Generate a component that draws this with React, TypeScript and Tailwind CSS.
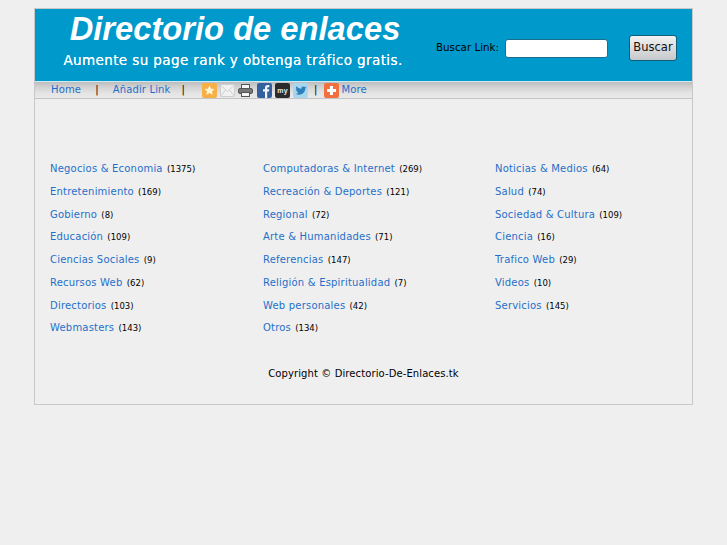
const font = { dejavu: "font-['DejaVu_Sans',sans-serif]" };

type Cat = { name: string; count: number };

const col1: Cat[] = [
  { name: 'Negocios & Economia', count: 1375 },
  { name: 'Entretenimiento', count: 169 },
  { name: 'Gobierno', count: 8 },
  { name: 'Educación', count: 109 },
  { name: 'Ciencias Sociales', count: 9 },
  { name: 'Recursos Web', count: 62 },
  { name: 'Directorios', count: 103 },
  { name: 'Webmasters', count: 143 },
];

const col2: Cat[] = [
  { name: 'Computadoras & Internet', count: 269 },
  { name: 'Recreación & Deportes', count: 121 },
  { name: 'Regional', count: 72 },
  { name: 'Arte & Humanidades', count: 71 },
  { name: 'Referencias', count: 147 },
  { name: 'Religión & Espiritualidad', count: 7 },
  { name: 'Web personales', count: 42 },
  { name: 'Otros', count: 134 },
];

const col3: Cat[] = [
  { name: 'Noticias & Medios', count: 64 },
  { name: 'Salud', count: 74 },
  { name: 'Sociedad & Cultura', count: 109 },
  { name: 'Ciencia', count: 16 },
  { name: 'Trafico Web', count: 29 },
  { name: 'Videos', count: 10 },
  { name: 'Servicios', count: 145 },
];

function Column({ items, width }: { items: Cat[]; width: string }) {
  return (
    <div className={`flex flex-col ${width}`}>
      {items.map((c) => (
        <div key={c.name} className="h-[22.75px] leading-[16px] whitespace-nowrap">
          <a className="text-[10px] tracking-[0.2px] text-[#1f6fc9]">{c.name}</a>
          <span className="ml-[1.5px] text-[8.5px] text-black"> ({c.count})</span>
        </div>
      ))}
    </div>
  );
}

function StarIcon() {
  return (
    <svg width="15" height="15" viewBox="0 0 15 15">
      <rect width="15" height="15" rx="2" fill="#f6b045" />
      <path d="M7.5 2.5l1.6 3.2 3.4.4-2.500 2.300.7 3.400-3.200-1.700-3.200 1.700.7-3.400L2.500 6.100l3.400-.4z" fill="#fff6d8" />
    </svg>
  );
}

function MailIcon() {
  return (
    <svg width="15" height="15" viewBox="0 0 15 15">
      <rect x="0.5" y="1.5" width="14" height="12" rx="1" fill="#f1f1f1" stroke="#cfcfcf" />
      <path d="M1 2.500l6.500 6 6.500-6M1 13l4.500-6M14 13l-4.500-6" fill="none" stroke="#cfcfcf" />
    </svg>
  );
}

function PrintIcon() {
  return (
    <svg width="15" height="15" viewBox="0 0 15 15">
      <rect x="3.5" y="1.5" width="8" height="4" fill="#f5f5f5" stroke="#555" />
      <rect x="0.5" y="5.5" width="14" height="5" rx="1.5" fill="#777" stroke="#555" />
      <rect x="3.5" y="9.5" width="8" height="4" fill="#f5f5f5" stroke="#555" />
    </svg>
  );
}

function FacebookIcon() {
  return (
    <svg width="15" height="15" viewBox="0 0 15 15">
      <rect width="15" height="15" rx="2" fill="#33609f" />
      <path d="M8 15V8.500H6V6.300h2V4.800C8 3 9.100 2 10.700 2h1.600v2.200h-1.100c-.8 0-1 .4-1 1v1.100h2l-.3 2.200h-1.700V15z" fill="#f2f5fa" />
    </svg>
  );
}

function MyspaceIcon() {
  return (
    <svg width="15" height="15" viewBox="0 0 15 15">
      <rect width="15" height="15" rx="2" fill="#2b2b2b" />
      <text x="7.5" y="9.5" textAnchor="middle" fontSize="7" fontWeight="700" fill="#e8e8e8" fontFamily="'Liberation Sans',sans-serif">
        my
      </text>
    </svg>
  );
}

function TwitterIcon() {
  return (
    <svg width="15" height="15" viewBox="0 0 15 15">
      <rect width="15" height="15" rx="2" fill="#a9d6ef" />
      <path d="M13.500 4.500c-.5.200-1 .4-1.500.4.500-.3 1-.8 1.100-1.400-.5.300-1 .5-1.600.6-1.100-1.200-3.400-.3-3 1.700C6.500 5.700 4.600 4.800 3.300 3.300c-.6 1.200-.3 2.300.6 3-.4 0-.8-.1-1.100-.3 0 1.100.8 2 1.900 2.300-.3.100-.7.100-1 0 .3.900 1.100 1.500 2.100 1.500-1 .8-2.100 1.100-3.300 1 3.500 2.100 9.800 1 10-6.200.4-.2.800-.6 1-1.100z" fill="#2c80bb" />
    </svg>
  );
}

function PlusIcon() {
  return (
    <svg width="15" height="15" viewBox="0 0 15 15">
      <rect width="15" height="15" rx="2" fill="#f0703f" />
      <path d="M6 3h3v3h3v3H9v3H6V9H3V6h3z" fill="#fff" />
    </svg>
  );
}

export default function App() {
  return (
    <div className={`min-h-[545px] bg-[#efefef] pt-2 ${font.dejavu}`}>
      <div className="ml-[34px] w-[659px] border border-[#c8c8c8]">
        {/* cabecera */}
        <div className="flex h-[72px] bg-[#0099cc]">
          <div className="flex w-[388px] flex-col items-center pl-[12px]">
            <h1 className="mt-[1px] font-['Liberation_Sans',sans-serif] text-[32.7px] leading-[38px] font-bold italic text-white">
              Directorio de enlaces
            </h1>
            <p className="mt-[3px] mr-[4px] text-[13.5px] leading-[18px] font-normal tracking-[0.4px] text-white [text-shadow:0_0_0.4px_#fff]">
              Aumente su page rank y obtenga tráfico gratis.
            </p>
          </div>
          <div className="flex items-center pt-[6px]">
            <label className="ml-[13px] text-[10.3px] text-black">Buscar Link:</label>
            <input className="ml-[6px] h-[19px] w-[103px] rounded-[3px] border border-[#1b6f8e] bg-white" />
            <button className="ml-[21px] h-[26px] w-[48px] rounded-[3px] border border-[#0f5f7c] bg-gradient-to-b from-[#f2f2f2] to-[#c6c9cc] text-[11.5px] text-[#111]">
              Buscar
            </button>
          </div>
        </div>

        {/* barra de enlaces */}
        <div className="flex h-[18px] items-center border-t border-b border-t-[#cfeaf5] border-b-[#c4c4c4] bg-[linear-gradient(#bdbdbd,#d4d4d4_35%,#e4e4e4_70%,#e9e9e9)] pb-[2px] text-[10px] tracking-[0.15px]">
          <a className="ml-[16px] text-[#1f6fc9]">Home</a>
          <span className="ml-[14px] text-black">|</span>
          <a className="ml-[14px] text-[#1f6fc9]">Añadir Link</a>
          <span className="ml-[11px] text-black">|</span>
          <div className="ml-[17px] flex translate-y-[1px] gap-[3.2px]">
            <StarIcon />
            <MailIcon />
            <PrintIcon />
            <FacebookIcon />
            <MyspaceIcon />
            <TwitterIcon />
          </div>
          <span className="ml-[6px] text-black">|</span>
          <div className="ml-[6px] flex translate-y-[1px]">
            <PlusIcon />
          </div>
          <a className="ml-[3px] text-[#1f6fc9]">More</a>
        </div>

        {/* categorias */}
        <div className="flex pt-[60px] pl-[15px]">
          <Column items={col1} width="w-[213px]" />
          <Column items={col2} width="w-[232px]" />
          <Column items={col3} width="w-[190px]" />
        </div>

        <p className="mt-[25px] pb-[22px] text-center text-[10px] leading-[16px] tracking-[0.1px] text-black">
          Copyright © Directorio-De-Enlaces.tk
        </p>
      </div>
    </div>
  );
}
